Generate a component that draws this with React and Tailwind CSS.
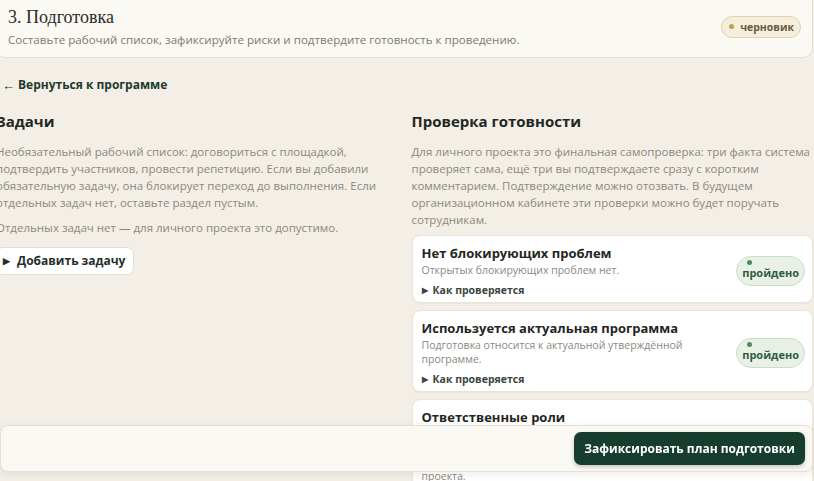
import React from 'react'

const sans = { fontFamily: '"Open Sans", "Noto Sans", sans-serif' }

function PassedPill() {
  return (
    <div className="shrink-0 flex flex-col items-start rounded-[16px] border border-[#c9dcc9] bg-[#e9f1e6] px-[5px] pt-[3px] pb-[4px]">
      <span className="ml-[5px] h-[5px] w-[5px] rounded-full bg-[#4c8a63]"></span>
      <span className="text-[11px] font-bold leading-[16px] text-[#2f5c45]">пройдено</span>
    </div>
  )
}

function CheckCard({ title, desc, hidePill, children }) {
  return (
    <div className="flex items-center gap-3 rounded-[8px] border border-[#e9e3d8] bg-white pl-[9px] pr-[7px] pt-[8px] pb-[5px] shadow-[0_1px_2px_rgba(60,50,30,0.05)]">
      <div className="flex-1 min-w-0">
        <div className="text-[13px] font-bold leading-[18px] text-[#1f2723]">{title}</div>
        <div className="mt-[1px] max-w-[280px] text-[10.5px] leading-[14px] text-[#8c887e]">{desc}</div>
        {children}
      </div>
      {!hidePill && <PassedPill />}
    </div>
  )
}

function HowChecked() {
  return (
    <div className="mt-[6px] flex items-center gap-[5px] text-[10.5px] font-bold leading-[14px] text-[#3c4540]">
      <span className="text-[8px]">▶</span>
      <span>Как проверяется</span>
    </div>
  )
}

export default function App() {
  return (
    <div className="relative h-[481px] w-[814px] overflow-hidden bg-[#f3efe6]" style={sans}>
      <div className="-ml-[4px] w-[817px]">
        {/* Header */}
        <div className="flex items-center justify-between rounded-b-[10px] border-b border-r border-[#e7e1d5] bg-[#fbf9f4] pl-[12px] pr-[11px] pt-[5px] pb-[9px]">
          <div>
            <div className="text-[18px] leading-[24px] text-[#2a2c28]" style={{ fontFamily: '"Liberation Serif", "DejaVu Serif", serif' }}>
              3. Подготовка
            </div>
            <div className="mt-[3px] text-[11.6px] leading-[16px] text-[#7d796f]">
              Составьте рабочий список, зафиксируйте риски и подтвердите готовность к проведению.
            </div>
          </div>
          <div className="flex items-center gap-[6px] rounded-full border border-[#e2d2ae] bg-[#f6eedc] pl-[7px] pr-[6px] py-[2px]">
            <span className="h-[5px] w-[5px] rounded-full bg-[#c49a55]"></span>
            <span className="text-[10.5px] font-bold leading-[16px] text-[#6a5a3c]">черновик</span>
          </div>
        </div>

        {/* Back link */}
        <div className="mt-[19px] flex items-center gap-[3px] pl-[6px] text-[12px] font-bold leading-[16px] text-[#1e3a2e]">
          <span className="text-[13px]">←</span>
          <span>Вернуться к программе</span>
        </div>

        {/* Columns */}
        <div className="mt-[18px] grid grid-cols-2 gap-[14px]">
          <div>
            <h2 className="text-[15px] font-bold leading-[20px] text-[#1f2723]">Задачи</h2>
            <p className="mt-[12px] pr-[20px] text-[11.5px] leading-[17px] text-[#8c887e]">
              Необязательный рабочий список: договориться с площадкой, подтвердить участников, провести репетицию. Если вы добавили обязательную задачу, она блокирует переход до выполнения. Если отдельных задач нет, оставьте раздел пустым.
            </p>
            <p className="mt-[8px] text-[11.5px] leading-[17px] text-[#8c887e]">
              Отдельных задач нет — для личного проекта это допустимо.
            </p>
            <button className="mt-[11px] flex h-[28px] items-center gap-[7px] rounded-[7px] border border-[#e4ded2] bg-white pl-[6px] pr-[8px] text-[12px] font-bold text-[#26302b]">
              <span className="text-[9px]">▶</span>
              Добавить задачу
            </button>
          </div>

          <div>
            <h2 className="text-[15px] font-bold leading-[20px] text-[#1f2723]">Проверка готовности</h2>
            <p className="mt-[12px] text-[11.5px] leading-[17px] text-[#8c887e]">
              Для личного проекта это финальная самопроверка: три факта система проверяет сама, ещё три вы подтверждаете сразу с коротким комментарием. Подтверждение можно отозвать. В будущем организационном кабинете эти проверки можно будет поручать сотрудникам.
            </p>
            <div className="mt-[7px] flex flex-col gap-[7px]">
              <CheckCard title="Нет блокирующих проблем" desc="Открытых блокирующих проблем нет.">
                <HowChecked />
              </CheckCard>
              <CheckCard title="Используется актуальная программа" desc="Подготовка относится к актуальной утверждённой программе.">
                <HowChecked />
              </CheckCard>
              <CheckCard
                title="Ответственные роли"
                desc="Ответственные роли распределены между участниками. Организатор и ведущий назначены, для личного проекта роли закреплены за владельцем проекта."
              >
                <HowChecked />
              </CheckCard>
            </div>
          </div>
        </div>
      </div>

      {/* Sticky action bar */}
      <div className="fixed bottom-[9px] left-0 flex h-[47px] w-[813px] items-center justify-end rounded-[8px] border border-[#e6e0d4] bg-[#faf8f3] pr-[7px] shadow-[0_2px_8px_rgba(60,50,30,0.10)]">
        <button className="h-[33px] w-[231px] rounded-[7px] bg-[#173d2f] text-[12px] font-bold text-white shadow-[0_2px_4px_rgba(0,0,0,0.2)]">
          Зафиксировать план подготовки
        </button>
      </div>
    </div>
  )
}
